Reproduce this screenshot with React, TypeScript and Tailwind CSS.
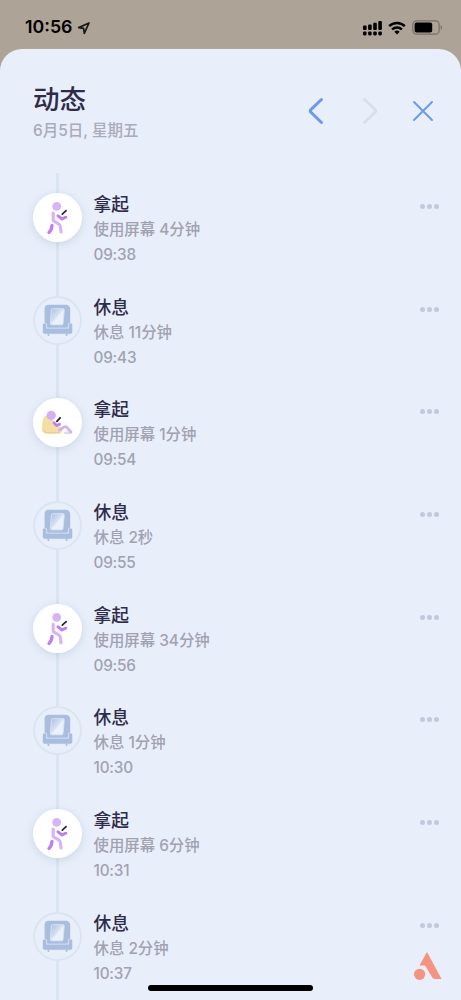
type Tipo = "walk" | "lounge" | "rest";

type Activity = { tipo: Tipo; detail: string; time: string };

const activities: Activity[] = [
  { tipo: "walk", detail: "使用屏幕 4分钟", time: "09:38" },
  { tipo: "rest", detail: "休息 11分钟", time: "09:43" },
  { tipo: "lounge", detail: "使用屏幕 1分钟", time: "09:54" },
  { tipo: "rest", detail: "休息 2秒", time: "09:55" },
  { tipo: "walk", detail: "使用屏幕 34分钟", time: "09:56" },
  { tipo: "rest", detail: "休息 1分钟", time: "10:30" },
  { tipo: "walk", detail: "使用屏幕 6分钟", time: "10:31" },
  { tipo: "rest", detail: "休息 2分钟", time: "10:37" },
];

// The three glyphs share a 49x49 box, the size of the circle.
function WalkIcon() {
  return (
    <svg viewBox="0 0 49 49" className="size-[49px]" fill="none" strokeLinecap="round" strokeLinejoin="round">
      <circle cx="23.7" cy="13.4" r="4.4" fill="#d7b5f5" />
      <path d="M20.2 20v7.6l5.4 3.2c1.2.8 1.6 1.6 1.8 3l.6 5.2" stroke="#d7b5f5" strokeWidth="3.2" />
      <path d="M19 32.4c-.2 3.3-1.1 5.2-3 7" stroke="#bd80ee" strokeWidth="3.3" />
      <path d="M25 22.8l4 3.2 3.8-1.8" stroke="#bd80ee" strokeWidth="3" />
      <path d="M29.3 21.2l3.8-3.6" stroke="#29263c" strokeWidth="1.7" />
    </svg>
  );
}

function LoungeIcon() {
  return (
    <svg viewBox="0 0 49 49" className="size-[49px]" fill="none" strokeLinecap="round" strokeLinejoin="round">
      <ellipse cx="34.8" cy="34.8" rx="4" ry="1.5" fill="#dedede" />
      <path d="M9 29c0-5.400.8-9 2.600-10.600 1.500-1.300 4.200-.8 6 1.200 3.200 3.600 5.400 7.200 9.800 9.400 3.200 1.800 2.600 6.600-1.400 6.600H14.500C10.600 35.600 9 33.400 9 29z" fill="#f3dfa6" />
      <path d="M10 31.500c.8 2.400 2.400 3.300 4.700 3.300H26" stroke="#e8d08e" strokeWidth="1.500" />
      <circle cx="18.200" cy="17.500" r="4.700" fill="#d4b0f4" />
      <path d="M21 24.800l2.600 2.800 3-1.400" stroke="#bd80ee" strokeWidth="2.800" />
      <path d="M23.900 23.300l3.200-3.500" stroke="#29263c" strokeWidth="1.800" />
      <path d="M26.500 32l4.900-3.100c.9-.5 1.500-.4 2.200.3l4.400 4.700" stroke="#d4b0f4" strokeWidth="2.800" />
    </svg>
  );
}

function RestIcon() {
  return (
    <svg viewBox="0 0 49 49" className="size-[49px] shrink-0">
      <defs>
        <linearGradient id="cushion" x1="0" y1="0" x2="1" y2="1">
          <stop offset="0" stopColor="#a9bedf" />
          <stop offset="0.55" stopColor="#dfe8f5" />
        </linearGradient>
      </defs>
      <path d="M15.700 8.700H33a4.200 4.200 0 0 1 4.200 4.200V28l-3 4H14.600l-3-4V12.900a4.200 4.200 0 0 1 4.100-4.200z" fill="#a9bedf" />
      <path d="M19.700 12.700h10.300a1.200 1.200 0 0 1 1.200 1.400L30 27.600c-.1.800-.6 1.200-1.400 1.200h-9.800c-1 0-1.500-.6-1.400-1.400l1-13.400c0-.8.500-1.300 1.300-1.300z" fill="url(#cushion)" stroke="#dbe5f3" strokeWidth=".9" />
      <path d="M30.500 13.400L18.400 28.300h10.200c.6 0 .9-.3 1-.9z" fill="#eaf1fb" />
      <path d="M11.200 27.600h1c.7 0 1.100.4 1.100 1.100v3.800h22.500v-3.800c0-.7.400-1.100 1.100-1.100h1c.7 0 1.300.4 1.300 1.100v7.300c0 1.100-.6 1.700-1.700 1.700H11.600c-1.100 0-1.700-.6-1.700-1.700v-7.300c0-.7.600-1.100 1.300-1.100z" fill="#a9bedf" stroke="#e0e9f6" strokeWidth="1.500" paintOrder="stroke" strokeLinejoin="round" />
      <path d="M15.400 38v1.200M33.600 38v1.200" stroke="#a9bedf" strokeWidth="1.700" strokeLinecap="round" />
    </svg>
  );
}

function Marker({ tipo }: { tipo: Tipo }) {
  if (tipo === "rest") {
    return (
      <div className="flex size-[49px] shrink-0 items-center justify-center rounded-full border-2 border-[#dae5f2]">
        <RestIcon />
      </div>
    );
  }
  return (
    <div className="z-10 size-[49px] shrink-0 rounded-full bg-white shadow-[0_2px_8px_rgba(120,140,175,0.25)]">
      {tipo === "walk" ? <WalkIcon /> : <LoungeIcon />}
    </div>
  );
}

function StatusBar() {
  return (
    <div className="flex h-[49px] items-center justify-between pt-[6px] pr-[18px] pl-[25px]">
      <div className="flex items-center gap-[5px]">
        <span className="text-[17.8px] font-semibold text-black">10:56</span>
        <svg viewBox="0 0 14 14" className="size-[14px]" fill="none">
          <path d="M12 2L1.700 6.600l4.900.8.7 4.900z" stroke="#1b1916" strokeWidth="1.700" strokeLinejoin="round" />
        </svg>
      </div>
      <div className="flex items-center gap-[6px]">
        <svg viewBox="0 0 19 16" className="h-[16px] w-[19px]">
          <rect x="0" y="5.500" width="3.600" height="4.600" rx="1.100" />
          <rect x="5.100" y="4.400" width="3.600" height="5.700" rx="1.100" />
          <rect x="10.200" y="2.800" width="3.600" height="7.300" rx="1.100" />
          <rect x="15.300" y="1" width="3.600" height="9.100" rx="1.100" />
          <rect x="0" y="11.500" width="3.600" height="3.900" rx="1.300" />
          <rect x="5.100" y="11.500" width="3.600" height="3.900" rx="1.300" />
          <rect x="10.200" y="11.500" width="3.600" height="3.900" rx="1.300" />
          <rect x="15.300" y="11.500" width="3.600" height="3.900" rx="1.300" />
        </svg>
        <svg viewBox="0 0 18 14" className="h-[14px] w-[18px]" fill="none" stroke="#000" strokeWidth="2.400">
          <path d="M1.200 5.100a11.200 11.200 0 0 1 15.600 0M4.100 8.500a7 7 0 0 1 9.800 0" />
          <path d="M9 13.400l-2.600-2.700a3.700 3.700 0 0 1 5.200 0z" fill="#000" stroke="none" />
        </svg>
        <svg viewBox="0 0 31 15" className="h-[15px] w-[31px]">
          <rect x=".8" y=".8" width="26.400" height="13.400" rx="3.800" fill="none" stroke="#786f64" strokeWidth="1.200" />
          <rect x="2.600" y="2.500" width="17.600" height="10" rx="2" />
          <path d="M28.700 5.200c1.800.7 1.800 3.900 0 4.600z" fill="#786f64" />
        </svg>
      </div>
    </div>
  );
}

function Row({ item, last }: { item: Activity; last: boolean }) {
  return (
    <li className="flex h-[102.7px] shrink-0">
      <div className="flex w-[49px] shrink-0 flex-col items-center">
        <Marker tipo={item.tipo} />
        <div className={last ? "h-[40px] w-[2.5px] bg-[#dae5f2]" : "w-[2.5px] flex-1 bg-[#dae5f2]"} />
      </div>
      <div className="ml-[11.5px] flex-1 whitespace-nowrap text-[#a2a1b1]">
        <h2 className="text-[17.8px] leading-[24px] font-medium text-[#2f2b4b]">
          {item.tipo === "rest" ? "休息" : "拿起"}
        </h2>
        <p className="text-[15.4px] leading-[26px] font-[450]">{item.detail}</p>
        <p className="text-[15.3px] leading-[24px] tracking-[-0.2px] font-[450]">{item.time}</p>
      </div>
      <button type="button" aria-label="更多" className="mt-[11px] mr-[22px] flex h-[5px] gap-[2px]">
        <span className="size-[5px] rounded-full bg-[#c1c9dc]" />
        <span className="size-[5px] rounded-full bg-[#c1c9dc]" />
        <span className="size-[5px] rounded-full bg-[#c1c9dc]" />
      </button>
    </li>
  );
}

export default function App() {
  return (
    <div className="relative flex h-[1000px] w-full flex-col overflow-hidden bg-[#ada396] font-['Inter','Noto_Sans_CJK_SC',sans-serif]">
      <StatusBar />
      <main className="flex min-h-0 flex-1 flex-col overflow-hidden rounded-t-[22px] bg-[#e8effa]">
        <header className="flex h-[124px] shrink-0 justify-between pt-[32px] pr-[27px] pl-[33px]">
          <div>
            <h1 className="text-[26.5px] leading-[36px] font-medium text-[#2f2b4b]">动态</h1>
            <p className="mt-px text-[15.5px] leading-[26px] font-[450] text-[#aaaaba]">6月5日, 星期五</p>
          </div>
          <div className="mt-[16px] flex h-[28px] items-center">
            <svg viewBox="0 0 16 28" className="h-[28px] w-[16px]" fill="none" stroke="#6b9aeb" strokeWidth="3" strokeLinecap="round" strokeLinejoin="round">
              <path d="M13.500 2.500L2.900 12.700q-1.300 1.300 0 2.600L13.500 25.500" />
            </svg>
            <svg viewBox="0 0 16 28" className="ml-[38px] h-[28px] w-[16px]" fill="none" stroke="#d8e0ed" strokeWidth="3" strokeLinecap="round" strokeLinejoin="round">
              <path d="M2.500 2.500L13.100 12.700q1.300 1.300 0 2.600L2.500 25.500" />
            </svg>
            <svg viewBox="0 0 22 22" className="ml-[34px] size-[22px]" fill="none" stroke="#6b9aeb" strokeWidth="2" strokeLinecap="round">
              <path d="M2 2l18 18M20 2L2 20" />
            </svg>
          </div>
        </header>
        <ul className="flex flex-col pl-[33px]">
          <li className="flex h-[20px] w-[49px] shrink-0 justify-center">
            <div className="w-[2.5px] bg-[#dae5f2]" />
          </li>
          {activities.map((a, i) => (
            <Row key={a.time} item={a} last={i === activities.length - 1} />
          ))}
        </ul>
      </main>
      <svg viewBox="0 0 28 28" className="absolute right-[19px] bottom-[20px] size-[28px]" fill="#f59383">
        <path d="M13 0l14.600 27h-6.500c-1.500 0-2.300-.5-3-1.700L12 14.900c-.5-.9-1.200-1.400-2.300-1.400H5.400z" />
        <circle cx="5.600" cy="22.300" r="5.600" />
      </svg>
      <div className="absolute bottom-[9px] left-[148px] h-[6px] w-[165px] rounded-full bg-black" />
    </div>
  );
}
